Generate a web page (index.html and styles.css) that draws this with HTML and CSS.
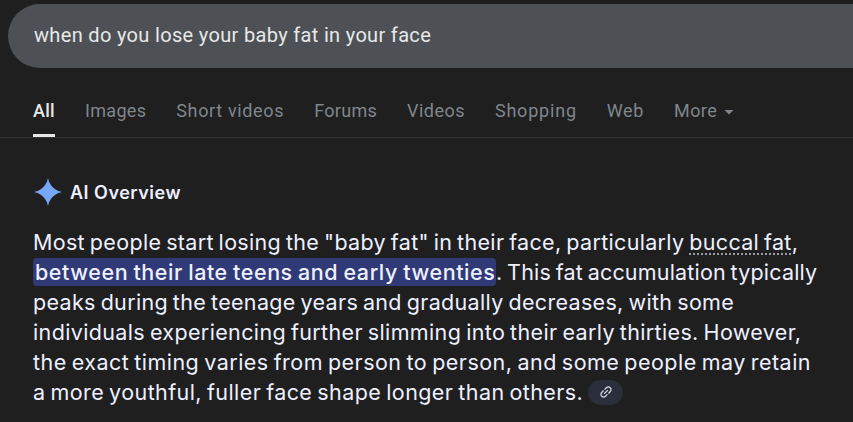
FILE: index.html
```html
<!doctype html>
<html lang="en">
<head>
    <meta charset="utf-8">
    <meta name="viewport" content="width=device-width, initial-scale=1">
    <title>when do you lose your baby fat in your face - Search</title>
    <link rel="stylesheet" href="styles.css">
</head>
<body>
    <div class="search-box"><span class="query">when do you lose your baby fat in your face</span></div>

    <nav class="tabs">
        <a class="tab active">All</a>
        <a class="tab images">Images</a>
        <a class="tab short">Short videos</a>
        <a class="tab forums">Forums</a>
        <a class="tab videos">Videos</a>
        <a class="tab shopping">Shopping</a>
        <a class="tab web">Web</a>
        <a class="tab more">More
            <svg class="caret" width="10" height="5" viewBox="0 0 10 5"><path d="M0.5 0h9L5 4.5z" fill="currentColor"/></svg>
        </a>
    </nav>

    <main class="overview">
        <div class="overview-head">
            <svg class="spark" width="28" height="28" viewBox="0 0 28 28"><path d="M14 0C15.6 7.6 20.4 12.4 28 14C20.4 15.6 15.6 20.4 14 28C12.4 20.4 7.6 15.6 0 14C7.6 12.4 12.4 7.6 14 0z" fill="#76a7fa"/></svg>
            <h1>AI Overview</h1>
        </div>
        <div class="answer">
            <div class="line l1"><span>Most people start losing the "baby fat" in their face, particularly <span class="term">buccal fat</span>,</span></div>
            <div class="line l2"><mark>between their late teens and early twenties</mark><span>. This fat accumulation typically</span></div>
            <div class="line l3"><span>peaks during the teenage years and gradually decreases, with some</span></div>
            <div class="line l4"><span>individuals experiencing further slimming into their early thirties. However,</span></div>
            <div class="line l5"><span>the exact timing varies from person to person, and some people may retain</span></div>
            <div class="line l6"><span>a more youthful, fuller face shape longer than others.</span>
                <button class="link-chip" aria-label="Sources">
                    <svg width="16" height="16" viewBox="0 0 24 24" fill="currentColor"><g transform="rotate(-45 12 12)"><path d="M3.9 12c0-1.71 1.39-3.1 3.1-3.1h4V7H7c-2.76 0-5 2.24-5 5s2.24 5 5 5h4v-1.9H7c-1.71 0-3.1-1.39-3.1-3.1zM8 13h8v-2H8v2zm9-6h-4v1.9h4c1.71 0 3.1 1.39 3.1 3.1s-1.39 3.1-3.1 3.1h-4V17h4c2.76 0 5-2.24 5-5s-2.24-5-5-5z"/></g></svg>
                </button>
            </div>
        </div>
    </main>
</body>
</html>
```
FILE: styles.css
```css
body {
    margin: 0;
    padding-top: 4px;
    height: 418px;
    overflow: hidden;
    background: #1f1f1f;
    color: #eef0ff;
    font-family: Inter, Roboto, sans-serif;
}

.search-box {
    display: flex;
    align-items: center;
    box-sizing: border-box;
    height: 64px;
    margin-left: 8px;
    padding: 0 0 2px 26px;
    border-radius: 32px 0 0 32px;
    background: #4d5156;
}

.query {
    color: #e8e8e8;
    font-family: Roboto, sans-serif;
    font-size: 20px;
    letter-spacing: 0.33px;
    white-space: nowrap;
}

.tabs {
    display: flex;
    box-sizing: border-box;
    height: 70px;
    padding: 26px 0 0 33px;
    border-bottom: 1px solid #313335;
    font-family: Roboto, sans-serif;
    font-size: 18px;
    letter-spacing: 0.3px;
    line-height: 34px;
    color: #80868b;
}

.tab {
    box-sizing: border-box;
    height: 43px;
    margin-right: 30px;
    white-space: nowrap;
}

.tab.active {
    color: #e8e8e8;
    font-weight: 500;
    border-bottom: 3px solid #e8e8e8;
}

.short {
    letter-spacing: 0.65px;
}

.videos {
    letter-spacing: 0.45px;
}

.shopping {
    letter-spacing: 0.8px;
}

.web {
    letter-spacing: 0.6px;
}

.more {
    letter-spacing: 0.45px;
}

.caret {
    margin-left: 2px;
    vertical-align: 2px;
}

.overview {
    padding: 40px 0 0 33px;
}

.overview-head {
    display: flex;
    align-items: center;
    height: 28px;
    padding-left: 1px;
    gap: 8px;
}

h1 {
    margin: 0;
    font-size: 18px;
    font-weight: 600;
    letter-spacing: 0.5px;
}

.answer {
    margin-top: 21px;
    font-size: 21.5px;
    line-height: 30px;
    word-spacing: -1.5px;
}

.line {
    display: flex;
    align-items: center;
    height: 30px;
    white-space: nowrap;
}

/* small tracking so each line fills its measure */
.l1 {
    letter-spacing: 0.32px;
}

.l2 {
    letter-spacing: 0.18px;
}

.l3 {
    letter-spacing: 0.325px;
}

.l4 {
    letter-spacing: 0.36px;
}

.l5 {
    letter-spacing: 0.47px;
}

.l6 {
    letter-spacing: 0.42px;
}

.term {
    background: repeating-linear-gradient(90deg, #9a9ba3 0 2px, transparent 2px 4px) 0 100% / 100% 2px no-repeat;
}

mark {
    box-sizing: border-box;
    width: 463px;
    height: 28px;
    padding: 0 2px;
    border-radius: 4px;
    background: #2f3a76;
    color: inherit;
    font-weight: 500;
    letter-spacing: 0.56px;
    word-spacing: -1px;
    line-height: 28px;
}

.link-chip {
    display: flex;
    align-items: center;
    justify-content: center;
    width: 35px;
    height: 25px;
    margin-left: 5px;
    padding: 0;
    border: 0;
    border-radius: 13px;
    background: #2b2e3b;
    color: #d5d7e0;
}
```
